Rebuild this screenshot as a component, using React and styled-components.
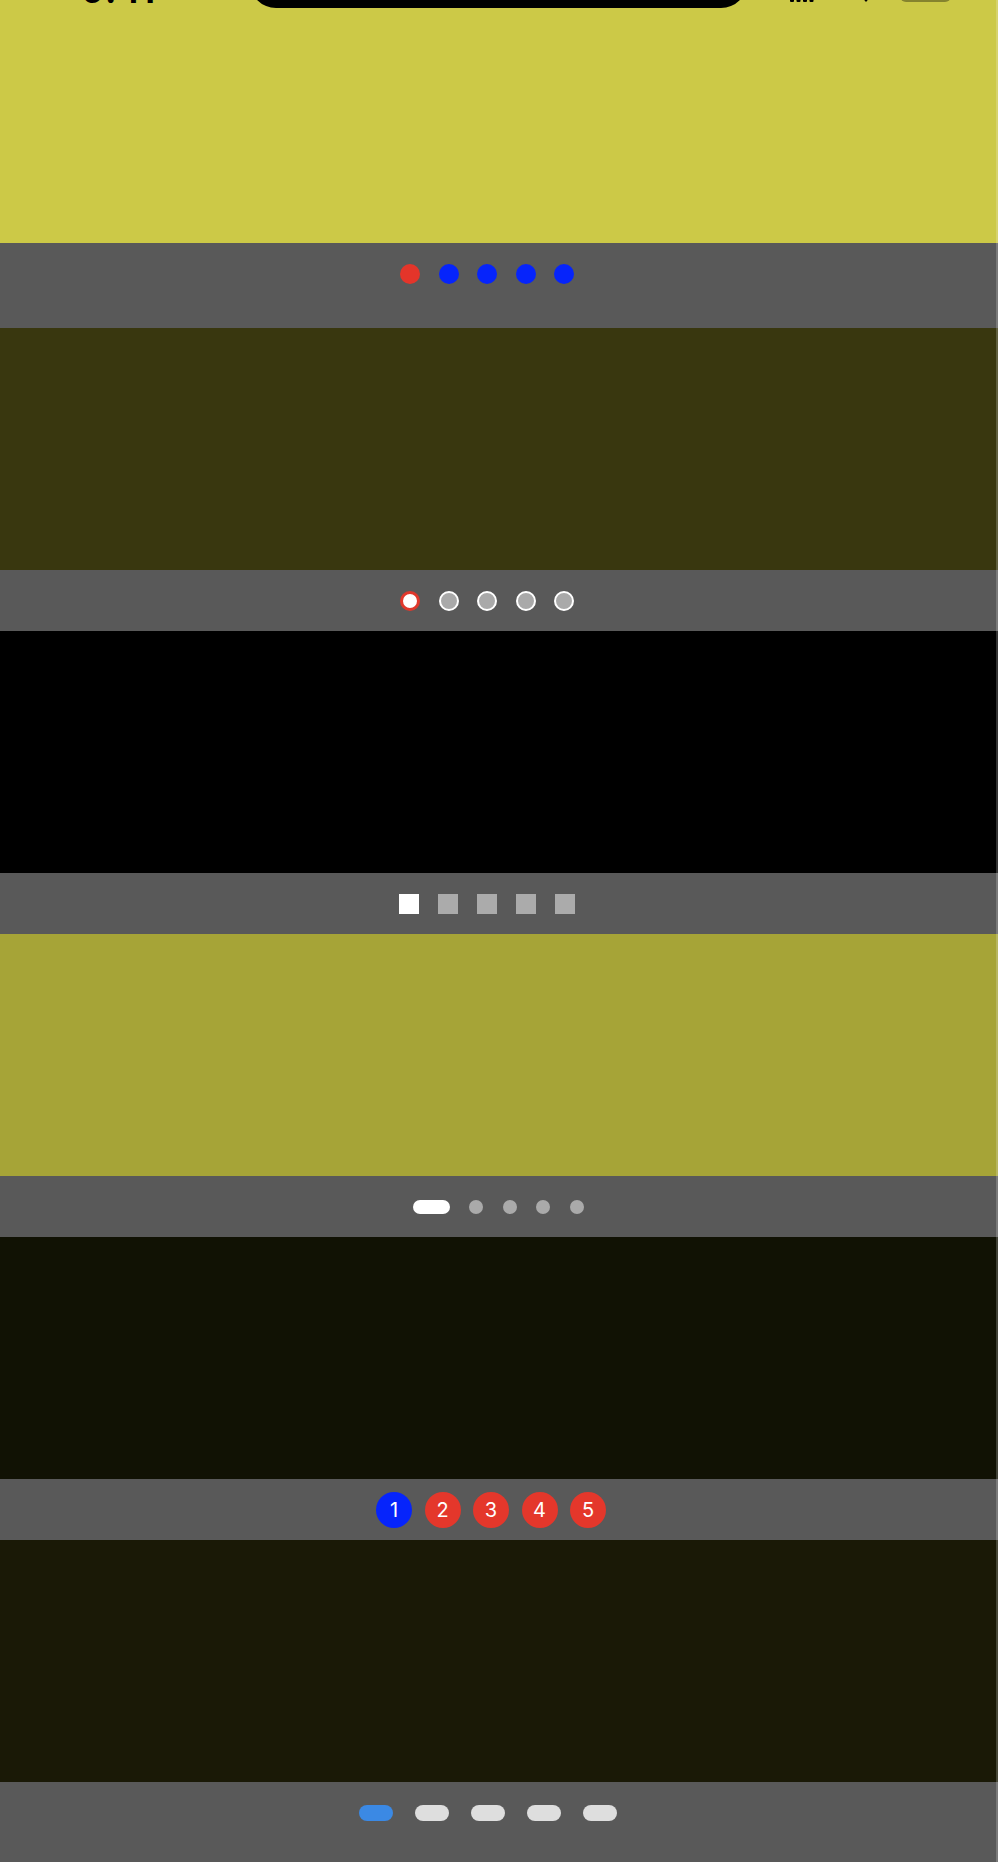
import styled, { createGlobalStyle } from 'styled-components';

const GlobalStyle = createGlobalStyle`
  html, body {
    margin: 0;
    padding: 0;
    background: #595959;
  }
  body {
    font-family: 'Inter', 'Liberation Sans', sans-serif;
  }
`;

const slides = [
  { color: '#ccc947', height: 243 },
  { color: '#39370f', height: 242 },
  { color: '#000000', height: 242 },
  { color: '#a6a437', height: 242 },
  { color: '#111204', height: 242 },
  { color: '#1a1906', height: 242 },
];

const Screen = styled.div`
  position: relative;
  width: 998px;
  min-height: 1862px;
  overflow: hidden;
  background: #595959;
`;

const Slide = styled.div`
  height: ${(p) => p.$height}px;
  background: ${(p) => p.$color};
`;

const Pager = styled.div`
  box-sizing: border-box;
  height: ${(p) => 61 + (p.$extra || 0)}px;
  padding-bottom: ${(p) => p.$extra || 0}px;
  padding-right: ${(p) => p.$shift || 0}px;
  display: flex;
  align-items: center;
  justify-content: center;
  gap: ${(p) => p.$gap}px;
  background: #595959;
`;

const Dot = styled.span`
  display: block;
  width: ${(p) => p.$w}px;
  height: ${(p) => p.$h || p.$w}px;
  border-radius: ${(p) => p.$radius ?? 999}px;
  background: ${(p) => p.$color};
`;

const RingDot = styled.span`
  display: block;
  box-sizing: border-box;
  width: 20px;
  height: 20px;
  border-radius: 50%;
  border: ${(p) => (p.$active ? '3px solid #e0382c' : '2.5px solid #ffffff')};
  background: ${(p) => (p.$active ? '#ffffff' : '#a9a9a9')};
`;

const NumberDot = styled.span`
  display: flex;
  align-items: center;
  justify-content: center;
  width: 36px;
  height: 36px;
  border-radius: 50%;
  background: ${(p) => (p.$active ? '#0624fb' : '#e4372b')};
  color: #ffffff;
  font-size: 20px;
  font-weight: 400;
  line-height: 1;
`;

const StatusBar = styled.div`
  position: absolute;
  top: 0;
  left: 0;
  right: 0;
  height: 10px;
  pointer-events: none;
`;

const Time = styled.span`
  position: absolute;
  left: 82px;
  top: -30px;
  font-size: 34px;
  font-weight: 700;
  letter-spacing: 1px;
  color: #000;
  font-family: 'Inter', 'Liberation Sans', sans-serif;
`;

const Notch = styled.div`
  position: absolute;
  left: 250px;
  width: 497px;
  top: -20px;
  height: 28px;
  background: #000;
  border-radius: 0 0 26px 26px;
`;

const StatusIcons = styled.svg`
  position: absolute;
  right: 46px;
  top: -20px;
`;

const EdgeStrip = styled.div`
  position: absolute;
  top: 0;
  right: 0;
  width: 2px;
  height: 100%;
  background: rgba(255, 255, 255, 0.2);
`;

const five = [0, 1, 2, 3, 4];

export default function App() {
  return (
    <>
      <GlobalStyle />
      <Screen>
        <Slide $color={slides[0].color} $height={slides[0].height} />
        <Pager $gap={18.5} $shift={24} $extra={24}>
          {five.map((i) => (
            <Dot key={i} $w={20} $color={i === 0 ? '#e4352a' : '#0624fb'} />
          ))}
        </Pager>

        <Slide $color={slides[1].color} $height={slides[1].height} />
        <Pager $gap={18.5} $shift={24}>
          {five.map((i) => (
            <RingDot key={i} $active={i === 0} />
          ))}
        </Pager>

        <Slide $color={slides[2].color} $height={slides[2].height} />
        <Pager $gap={19} $shift={24}>
          {five.map((i) => (
            <Dot key={i} $w={20} $radius={0} $color={i === 0 ? '#ffffff' : '#ababab'} />
          ))}
        </Pager>

        <Slide $color={slides[3].color} $height={slides[3].height} />
        <Pager $gap={19.5} $shift={2}>
          {five.map((i) =>
            i === 0 ? (
              <Dot key={i} $w={37} $h={14} $radius={7} $color="#ffffff" />
            ) : (
              <Dot key={i} $w={14} $color="#aaaaaa" />
            )
          )}
        </Pager>

        <Slide $color={slides[4].color} $height={slides[4].height} />
        <Pager $gap={12.5} $shift={16}>
          {five.map((i) => (
            <NumberDot key={i} $active={i === 0}>
              {i + 1}
            </NumberDot>
          ))}
        </Pager>

        <Slide $color={slides[5].color} $height={slides[5].height} />
        <Pager $gap={22} $shift={23} $extra={19}>
          {five.map((i) => (
            <Dot key={i} $w={34} $h={16} $radius={8} $color={i === 0 ? '#3b89e4' : '#dedede'} />
          ))}
        </Pager>

        <StatusBar>
          <Time>9:41</Time>
          <Notch />
          <StatusIcons width="162" height="24" viewBox="0 0 162 24">
            <rect x="0" y="14" width="4" height="8" rx="1" fill="#000" />
            <rect x="6.5" y="10" width="4" height="12" rx="1" fill="#000" />
            <rect x="13" y="6" width="4" height="16" rx="1" fill="#000" />
            <rect x="19.5" y="2" width="4" height="20" rx="1" fill="#000" />
            <path d="M62 6 Q76 -4 90 6 L76 22 Z" fill="#000" />
            <rect x="110" y="0" width="51" height="22" rx="6" fill="rgba(0,0,0,0.35)" />
          </StatusIcons>
        </StatusBar>
        <EdgeStrip />
      </Screen>
    </>
  );
}
